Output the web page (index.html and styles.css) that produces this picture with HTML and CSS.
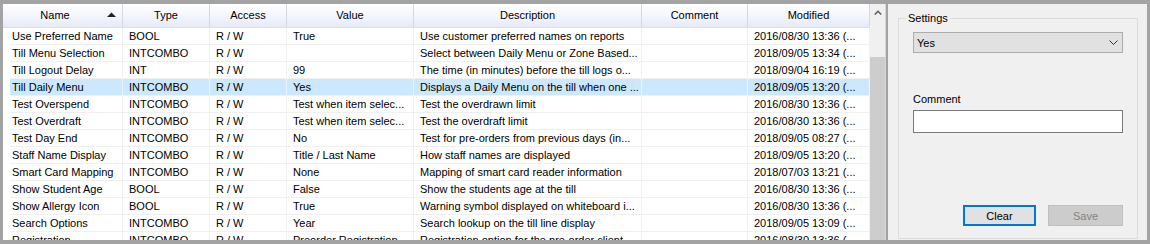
FILE: index.html
```html
<!DOCTYPE html>
<html lang="en">
<head>
  <meta charset="UTF-8" />
  <meta name="viewport" content="width=device-width, initial-scale=1.0" />
  <title>Till Settings</title>
  <link rel="stylesheet" href="styles.css">
</head>
<body>
  <div class="window">
    <div class="grid">
      <div class="table">
        <div class="head">
          <div class="hcell name-head"><span class="label">Name</span>
            <svg class="sort" width="9" height="5" viewBox="0 0 9 5"><path d="M0 5 L4.5 0.5 L9 5 Z" fill="#222"/></svg>
          </div>
          <div class="hcell">Type</div>
          <div class="hcell">Access</div>
          <div class="hcell">Value</div>
          <div class="hcell">Description</div>
          <div class="hcell">Comment</div>
          <div class="hcell">Modified</div>
        </div>

        <div class="rows">
          <div class="row"><div class="cell">Use Preferred Name</div><div class="cell">BOOL</div><div class="cell">R / W</div><div class="cell">True</div><div class="cell">Use customer preferred names on reports</div><div class="cell"></div><div class="cell">2016/08/30 13:36 (...</div></div>
          <div class="row"><div class="cell">Till Menu Selection</div><div class="cell">INTCOMBO</div><div class="cell">R / W</div><div class="cell"></div><div class="cell">Select between Daily Menu or Zone Based...</div><div class="cell"></div><div class="cell">2018/09/05 13:34 (...</div></div>
          <div class="row"><div class="cell">Till Logout Delay</div><div class="cell">INT</div><div class="cell">R / W</div><div class="cell">99</div><div class="cell">The time (in minutes) before the till logs o...</div><div class="cell"></div><div class="cell">2018/09/04 16:19 (...</div></div>
          <div class="row sel"><div class="cell">Till Daily Menu</div><div class="cell">INTCOMBO</div><div class="cell">R / W</div><div class="cell">Yes</div><div class="cell">Displays a Daily Menu on the till when one ...</div><div class="cell"></div><div class="cell">2018/09/05 13:20 (...</div></div>
          <div class="row"><div class="cell">Test Overspend</div><div class="cell">INTCOMBO</div><div class="cell">R / W</div><div class="cell">Test when item selec...</div><div class="cell">Test the overdrawn limit</div><div class="cell"></div><div class="cell">2016/08/30 13:36 (...</div></div>
          <div class="row"><div class="cell">Test Overdraft</div><div class="cell">INTCOMBO</div><div class="cell">R / W</div><div class="cell">Test when item selec...</div><div class="cell">Test the overdraft limit</div><div class="cell"></div><div class="cell">2016/08/30 13:36 (...</div></div>
          <div class="row"><div class="cell">Test Day End</div><div class="cell">INTCOMBO</div><div class="cell">R / W</div><div class="cell">No</div><div class="cell">Test for pre-orders from previous days (in...</div><div class="cell"></div><div class="cell">2018/09/05 08:27 (...</div></div>
          <div class="row"><div class="cell">Staff Name Display</div><div class="cell">INTCOMBO</div><div class="cell">R / W</div><div class="cell">Title / Last Name</div><div class="cell">How staff names are displayed</div><div class="cell"></div><div class="cell">2018/09/05 13:20 (...</div></div>
          <div class="row"><div class="cell">Smart Card Mapping</div><div class="cell">INTCOMBO</div><div class="cell">R / W</div><div class="cell">None</div><div class="cell">Mapping of smart card reader information</div><div class="cell"></div><div class="cell">2018/07/03 13:21 (...</div></div>
          <div class="row"><div class="cell">Show Student Age</div><div class="cell">BOOL</div><div class="cell">R / W</div><div class="cell">False</div><div class="cell">Show the students age at the till</div><div class="cell"></div><div class="cell">2016/08/30 13:36 (...</div></div>
          <div class="row"><div class="cell">Show Allergy Icon</div><div class="cell">BOOL</div><div class="cell">R / W</div><div class="cell">True</div><div class="cell">Warning symbol displayed on whiteboard i...</div><div class="cell"></div><div class="cell">2016/08/30 13:36 (...</div></div>
          <div class="row"><div class="cell">Search Options</div><div class="cell">INTCOMBO</div><div class="cell">R / W</div><div class="cell">Year</div><div class="cell">Search lookup on the till line display</div><div class="cell"></div><div class="cell">2018/09/05 13:09 (...</div></div>
          <div class="row"><div class="cell">Registration</div><div class="cell">INTCOMBO</div><div class="cell">R / W</div><div class="cell">Preorder Registration</div><div class="cell">Registration option for the pre-order client</div><div class="cell"></div><div class="cell">2016/08/30 13:36 (...</div></div>
        </div>
      </div>

      <div class="scrollbar">
        <div class="scroll-up">
          <svg width="8" height="5" viewBox="0 0 8 5"><path d="M0.8 4.5 L4 1.3 L7.2 4.5" fill="none" stroke="#606060" stroke-width="1.6"/></svg>
        </div>
        <div class="thumb"></div>
      </div>
    </div>

    <div class="divider"></div>

    <div class="panel">
      <fieldset class="settings">
        <legend>Settings</legend>
        <div class="combo">
          <span>Yes</span>
          <svg width="9" height="5" viewBox="0 0 9 5"><path d="M0.5 0.5 L4.5 4.5 L8.5 0.5" fill="none" stroke="#333" stroke-width="1"/></svg>
        </div>
        <div class="field-label">Comment</div>
        <input class="textbox" type="text">
        <div class="buttons">
          <button class="btn btn-default">Clear</button>
          <button class="btn btn-disabled">Save</button>
        </div>
      </fieldset>
    </div>
  </div>
</body>
</html>
```

FILE: styles.css
```css
* {
  box-sizing: border-box;
}
body {
  margin: 0;
  background: #a3a3a3;
  font-family: "Liberation Sans", Arial, sans-serif;
  font-size: 11px;
  color: #000;
}
.window {
  width: 1150px;
  height: 244px;
  display: flex;
  border-style: solid;
  border-color: #a3a3a3;
  border-width: 4px 3px 4px 3px;
  background: #f0f0f0;
  overflow: hidden;
}

/* list view */
.grid {
  display: flex;
  background: #fff;
  overflow: hidden;
}
.table {
  width: 867px;
  overflow: hidden;
}
.head {
  display: grid;
  grid-template-columns: 120px 87px 77px 127px 228px 106px 122px;
  height: 24px;
  background: linear-gradient(#ffffff, #f3f5fc 55%, #e6eaf7);
  border-bottom: 1px solid #dde1ec;
}
.hcell {
  line-height: 23px;
  text-align: center;
  border-right: 1px solid #d5d8e0;
  white-space: nowrap;
}
.name-head {
  display: flex;
  align-items: center;
}
.name-head .label {
  flex: 1;
  text-align: center;
}
.sort {
  margin-right: 6px;
  margin-top: -2px;
}
.rows {
  margin-left: 7px;
}
.row {
  display: grid;
  grid-template-columns: 113px 87px 77px 127px 228px 106px 122px;
  height: 17px;
  border-bottom: 1px solid #f0f0f0;
}
.cell {
  line-height: 16px;
  padding-left: 6px;
  border-right: 1px solid #f0f0f0;
  white-space: nowrap;
  overflow: hidden;
}
.row .cell:first-child {
  padding-left: 2px;
}
.row.sel {
  background: #cce8ff;
}
.row.sel .cell {
  border-right-color: #e8f4ff;
}
.scrollbar {
  width: 15px;
  display: flex;
  flex-direction: column;
  background: #f0f0f0;
}
.scroll-up {
  height: 17px;
  display: flex;
  align-items: center;
  justify-content: center;
}
.thumb {
  flex: 1;
  margin-top: 36px;
  background: #cdcdcd;
}
.divider {
  width: 3px;
  background: #a3a3a3;
  border-left: 1px solid #d6d6d6;
}

/* settings panel */
.panel {
  width: 259px;
  display: flex;
  flex-direction: column;
  padding: 8px 9px 1px 10px;
}
.settings {
  flex: 1;
  margin: 0;
  min-width: 0;
  padding: 0 14px 11px;
  border: 1px solid #dcdcdc;
  display: flex;
  flex-direction: column;
}
.settings legend {
  padding: 0 2px;
  margin-left: -7px;
  line-height: 13px;
}
.combo {
  margin-top: 7px;
  height: 21px;
  display: flex;
  align-items: center;
  justify-content: space-between;
  padding: 0 4px 0 3px;
  background: #e1e1e1;
  border: 1px solid #adadad;
}
.field-label {
  margin-top: 39px;
  line-height: 14px;
}
.textbox {
  margin: 4px 0 0;
  height: 23px;
  border: 1px solid #7a7a7a;
  background: #fff;
  outline: none;
  padding: 0 3px;
  font: inherit;
}
.buttons {
  margin-top: 72px;
  display: flex;
  justify-content: flex-end;
  gap: 12px;
}
.btn {
  height: 21px;
  font: inherit;
  padding: 0;
}
.btn-default {
  width: 73px;
  background: #e1e1e1;
  border: 2px solid #0078d7;
  color: #000;
}
.btn-disabled {
  width: 75px;
  background: #cccccc;
  border: 1px solid #bfbfbf;
  color: #838383;
}
```
